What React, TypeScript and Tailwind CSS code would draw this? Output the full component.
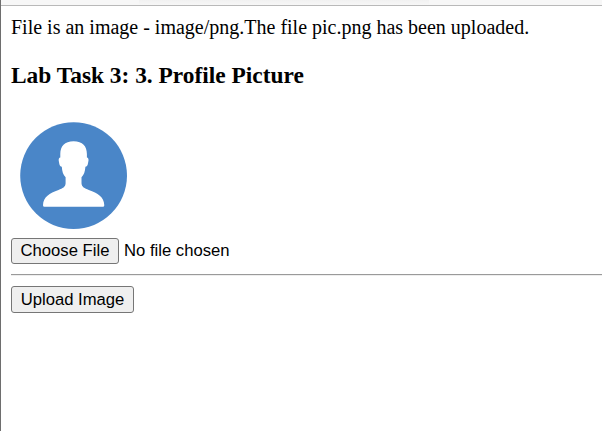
import React from "react";

function ProfilePicture() {
  return (
    <svg className="block h-[125px] w-[125px]" viewBox="11 113 125 125" role="img" aria-label="Profile picture">
      <circle cx="73.6" cy="175.6" r="53.4" fill="#4a86c8" />
      <path
        fill="#fff"
        d="M73.6 141.2C64.5 141.2 60.3 146 60.3 154V157.6C59 157.8 58.6 158.8 58.7 160.5L59.4 164.2C59.8 165.8 60.5 166.6 61.8 166.7C62.1 171.5 63.2 174.8 65.6 177.3V183.3C65.4 187 62.8 188.4 58.5 190C49.5 193.2 43.3 196.8 43 205.3Q43 206.8 44.5 206.8H102.8Q104.3 206.8 104.3 205.3C104 196.8 97.8 193.2 88.8 190C84.5 188.4 81.7 187 81.5 183.3V177.3C83.9 174.8 85.1 171.5 85.4 166.7C86.7 166.6 87.4 165.8 87.8 164.2L88.5 160.5C88.6 158.8 88.2 157.8 86.9 157.6V154C86.9 146 82.7 141.2 73.6 141.2Z"
      />
    </svg>
  );
}

function NativeButton({ children, className }: { children: React.ReactNode; className: string }) {
  return (
    <button
      type="button"
      className={`flex items-center justify-center whitespace-nowrap rounded-[3px] border border-[#767676] bg-[#efefef] ${className}`}
    >
      {children}
    </button>
  );
}

export default function App() {
  return (
    <div className="flex h-[431px] w-[602px] flex-col overflow-hidden border-l border-[#6e6e6e] bg-white text-black">
      <div className="flex h-[6px] shrink-0 border-b border-[#b9b9b9] bg-[#f7f7f7]">
        <div className="ml-[138px] h-[5px] w-[290px] bg-linear-to-b from-[#f1f1f1] to-[#f7f7f7]" />
      </div>
      <main className="flex flex-col pl-[10px]">
        <p className="mt-[10px] h-[23px] whitespace-nowrap font-['Liberation_Serif',serif] text-[20px] leading-[23px]">
          File is an image - image/png.The file pic.png has been uploaded.
        </p>
        <h3 className="mt-[23px] h-[27px] whitespace-nowrap font-['Liberation_Serif',serif] text-[23.4px] font-bold leading-[27px]">
          Lab Task 3: 3. Profile Picture
        </h3>
        <div className="mt-[24px]">
          <ProfilePicture />
        </div>
        <form className="flex flex-col font-['Liberation_Sans',sans-serif] text-[16.667px] leading-[19px]">
          <div className="flex h-[26px] items-center gap-[5px]">
            <NativeButton className="h-[26px] w-[108px] pb-[2px]">Choose File</NativeButton>
            <span className="whitespace-nowrap pb-[2px]">No file chosen</span>
          </div>
          <hr className="mt-[10px] h-[2px] border-t border-b border-t-[#9a9a9a] border-b-[#eeeeee]" />
          <NativeButton className="mt-[10px] h-[27px] w-[123px]">Upload Image</NativeButton>
        </form>
      </main>
    </div>
  );
}
